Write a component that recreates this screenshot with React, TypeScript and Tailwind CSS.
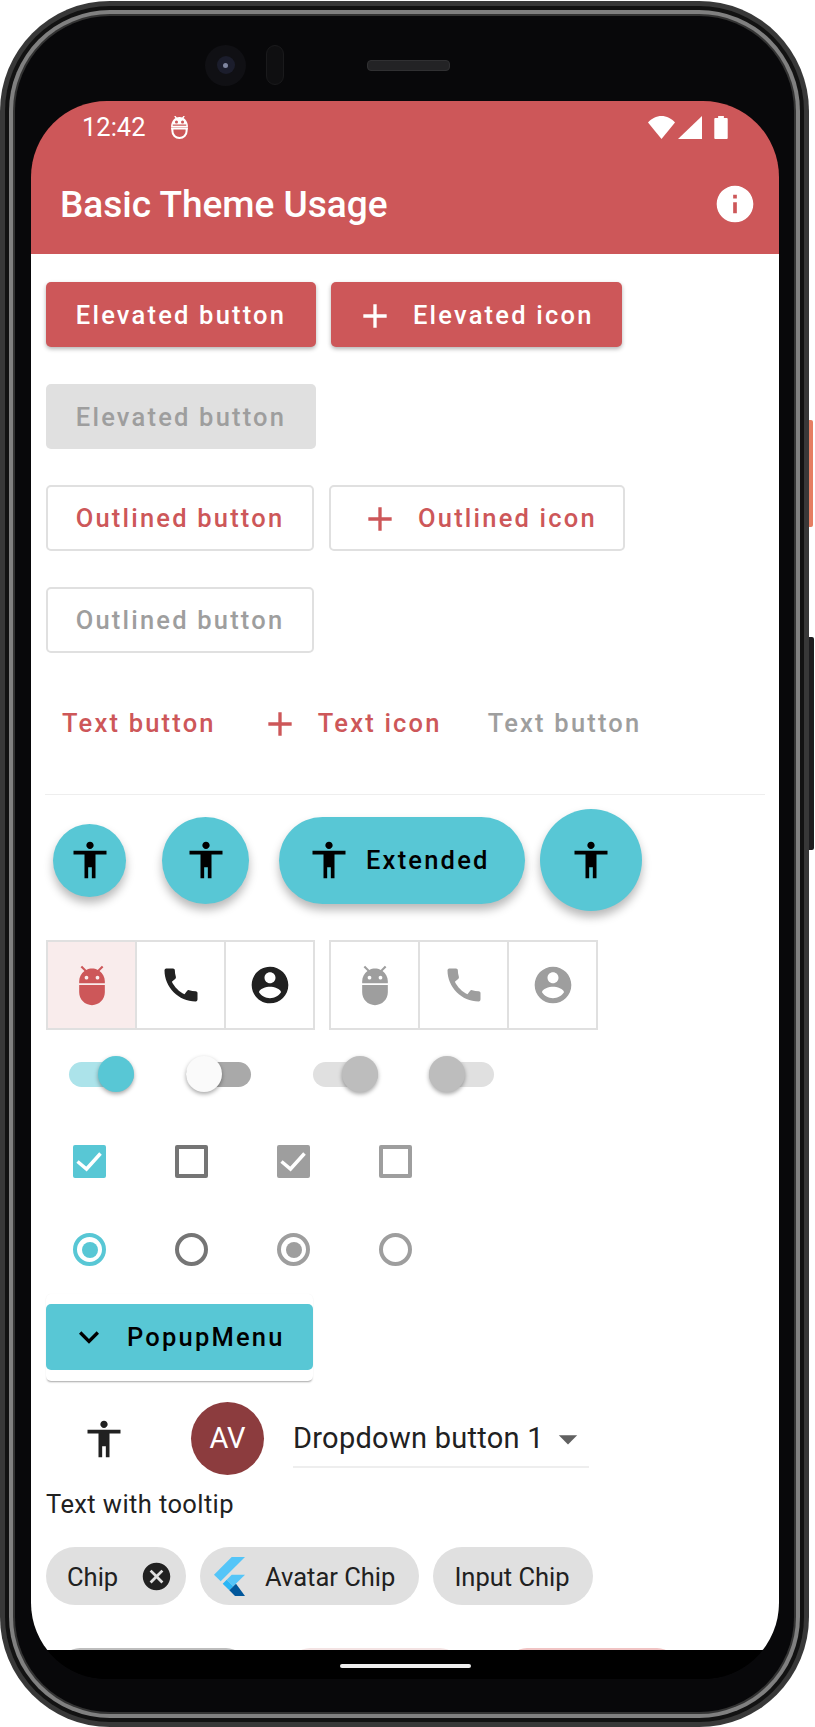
const ADD = "M19 13h-6v6h-2v-6H5v-2h6V5h2v6h6v2z";
const ACCESS =
  "M12 2c1.1 0 2 .9 2 2s-.9 2-2 2-2-.9-2-2 .9-2 2-2zm9 7h-6v13h-2v-6h-2v6H9V9H3V7h18v2z";
const ADB =
  "M5 16c0 3.87 3.13 7 7 7s7-3.13 7-7v-4H5v4zM16.12 4.37l2.1-2.1-.82-.83-2.31 2.31C14.16 3.28 13.12 3 12 3s-2.16.28-3.09.75L6.6 1.44l-.82.83 2.1 2.1C6.14 5.64 5 7.68 5 10v1h14v-1c0-2.32-1.14-4.36-2.88-5.63zM9 9c-.55 0-1-.45-1-1s.45-1 1-1 1 .45 1 1-.45 1-1 1zm6 0c-.55 0-1-.45-1-1s.45-1 1-1 1 .45 1 1-.45 1-1 1z";
const PHONE =
  "M20.01 15.38c-1.23 0-2.42-.2-3.53-.56-.35-.12-.74-.03-1.01.24l-1.57 1.97c-2.83-1.35-5.48-3.9-6.89-6.83l1.95-1.66c.27-.28.35-.67.24-1.02-.37-1.11-.56-2.3-.56-3.53 0-.54-.45-.99-.99-.99H4.19C3.65 3 3 3.24 3 3.99 3 13.28 10.73 21 20.01 21c.71 0 .99-.63.99-1.18v-3.45c0-.54-.45-.99-.99-.99z";
const ACCOUNT =
  "M12 2C6.48 2 2 6.48 2 12s4.48 10 10 10 10-4.48 10-10S17.52 2 12 2zm0 3c1.66 0 3 1.34 3 3s-1.34 3-3 3-3-1.34-3-3 1.34-3 3-3zm0 14.2c-2.5 0-4.71-1.28-6-3.22.03-1.99 4-3.08 6-3.08 1.99 0 5.97 1.09 6 3.08-1.29 1.94-3.5 3.22-6 3.22z";
const INFO =
  "M12 2C6.48 2 2 6.48 2 12s4.48 10 10 10 10-4.48 10-10S17.52 2 12 2zm1 15h-2v-6h2v6zm0-8h-2V7h2v2z";
const CANCEL =
  "M12 2C6.47 2 2 6.47 2 12s4.47 10 10 10 10-4.47 10-10S17.53 2 12 2zm5 13.59L15.59 17 12 13.41 8.41 17 7 15.59 10.59 12 7 8.41 8.41 7 12 10.59 15.59 7 17 8.41 13.41 12 17 15.59z";
const EXPAND = "M16.59 8.59L12 13.17 7.41 8.59 6 10l6 6 6-6z";

const Icon = ({ d, className }: { d: string; className: string }) => (
  <svg viewBox="0 0 24 24" fill="currentColor" className={className}>
    <path d={d} />
  </svg>
);

const btnText = "text-[25.5px] font-medium tracking-[2.2px] leading-none pt-[2px]";

const Fab = ({ className, label }: { className: string; label?: string }) => (
  <div
    className={`flex items-center justify-center rounded-full bg-[#58c7d5] text-black shadow-[0_6px_10px_rgba(0,0,0,0.28)] ${className}`}
  >
    <Icon d={ACCESS} className="w-[44px] h-[44px] shrink-0" />
    {label && <span className={`ml-[15px] ${btnText}`}>{label}</span>}
  </div>
);

const ToggleGroup = ({ disabled }: { disabled?: boolean }) => {
  const cell = "flex-1 flex items-center justify-center";
  return (
    <div
      className={`flex h-[90px] w-[269px] border-2 border-[#e0e0e0] divide-x-2 divide-[#e0e0e0] ${
        disabled ? "text-[#9e9e9e]" : "text-[#212121]"
      }`}
    >
      <div className={`${cell} ${disabled ? "" : "bg-[#f9ecec] text-[#cd5759]"}`}>
        <Icon d={ADB} className="w-[44px] h-[44px]" />
      </div>
      <div className={cell}>
        <Icon d={PHONE} className="w-[44px] h-[44px]" />
      </div>
      <div className={cell}>
        <Icon d={ACCOUNT} className="w-[44px] h-[44px]" />
      </div>
    </div>
  );
};

const Switch = ({
  className,
  track,
  thumb,
  on,
}: {
  className: string;
  track: string;
  thumb: string;
  on: boolean;
}) => (
  <div
    className={`flex items-center w-[65px] h-[25px] rounded-full ${track} ${className} ${
      on ? "justify-end" : "justify-start"
    }`}
  >
    <div
      className={`w-[36px] h-[36px] shrink-0 rounded-full shadow-[0_2px_4px_rgba(0,0,0,0.35)] ${thumb}`}
    />
  </div>
);

const Checkbox = ({ color, checked }: { color: string; checked: boolean }) => (
  <div className="w-[102px] pl-[27px]">
    <div
      className={`w-[33px] h-[33px] rounded-[2px] border-[4px] flex items-center justify-center ${color} ${
        checked ? "bg-current" : ""
      }`}
    >
      {checked && (
        <svg
          viewBox="0 0 33 33"
          fill="none"
          stroke="white"
          strokeWidth="3.5"
          className="w-[33px] h-[33px] shrink-0"
        >
          <path d="M4.500 16.500l9 7.500 14-15.500" />
        </svg>
      )}
    </div>
  </div>
);

const Radio = ({ color, checked }: { color: string; checked: boolean }) => (
  <div className="w-[102px] pl-[27px]">
    <div
      className={`w-[33px] h-[33px] rounded-full border-[4px] border-current flex items-center justify-center ${color}`}
    >
      {checked && <div className="w-[16px] h-[16px] shrink-0 rounded-full bg-current" />}
    </div>
  </div>
);

const FlutterLogo = () => (
  <svg viewBox="0 0 93 117" className="w-[31px] h-[39px] shrink-0">
    <path d="M93 0H53L0 53l20 20z" fill="#54c5f8" />
    <path d="M93 53H53L38 68l20 20z" fill="#54c5f8" />
    <path d="M38 68L26 80l20 20 12-12z" fill="#29b6f6" />
    <path d="M46 100l20-20 27 37H63z" fill="#01579b" />
  </svg>
);

export default function App() {
  return (
    <div className="relative w-[815px] h-[1727px] bg-white overflow-hidden font-['Roboto',sans-serif]">
      {/* side buttons */}
      <div className="absolute left-[806px] top-[420px] w-[7px] h-[107px] rounded-r-[2px] bg-[#e67e62]" />
      <div className="absolute left-[806px] top-[637px] w-[8px] h-[213px] rounded-r-[2px] bg-[#1d1d1f]" />

      {/* phone body */}
      <div className="relative w-[809px] h-[1726px] mt-[1px] rounded-[110px] bg-[#383838] p-[5px]">
        <div className="w-full h-full rounded-[105px] bg-[#121212] p-[4px]">
          <div className="w-full h-full rounded-[101px] bg-[#808080] p-[4px]">
            <div className="w-full h-full rounded-[97px] bg-[#333333] p-[2px]">
              <div className="w-full h-full rounded-[95px] bg-[#08080a] pt-[23px] pl-[16px] pr-[15px] pb-[33px] flex flex-col">
                {/* camera and speaker */}
                <div className="h-[52px] mb-[10px] shrink-0 flex items-center pl-[174px]">
                  <div className="w-[41px] h-[41px] rounded-full bg-[#101014] flex items-center justify-center">
                    <div className="w-[18px] h-[18px] rounded-full bg-[#1b1d2c] flex items-center justify-center">
                      <div className="w-[5px] h-[5px] rounded-full bg-[#7f86a0]" />
                    </div>
                  </div>
                  <div className="ml-[20px] w-[18px] h-[40px] rounded-full bg-[#0f0f11] border border-[#1a1a1c]" />
                  <div className="ml-[83px] w-[83px] h-[11px] rounded-[4px] bg-[#232325] border border-[#303032]" />
                </div>

                {/* screen */}
                <div className="flex-1 rounded-[76px] overflow-hidden bg-black flex flex-col">
                  {/* status bar */}
                  <div className="h-[51px] shrink-0 bg-[#cd5759] text-white flex items-center pl-[51px] pr-[51px] pt-[2px]">
                    <span className="text-[25.5px] leading-none">12:42</span>
                    <svg viewBox="0 0 56 68" className="ml-[24px] w-[19px] h-[23px]">
                      <path
                        d="M3 33C3 15 14 3 28 3s25 12 25 30z"
                        fill="currentColor"
                      />
                      <path d="M14 0l6 8M42 0l-6 8" stroke="currentColor" strokeWidth="4" />
                      <circle cx="19" cy="18" r="4.500" fill="#cd5759" />
                      <circle cx="37" cy="18" r="4.500" fill="#cd5759" />
                      <path d="M8 27h40" stroke="#cd5759" strokeWidth="4" />
                      <path
                        d="M3 37h50M7 37v7c0 12 9 21 21 21s21-9 21-21v-4"
                        fill="none"
                        stroke="currentColor"
                        strokeWidth="6"
                      />
                    </svg>
                    <div className="ml-auto flex items-center">
                      <svg viewBox="0 0 27 23" fill="currentColor" className="w-[27px] h-[23px]">
                        <path d="M13.500 23L0 6.500C3.500 2.500 8.500 0 13.500 0S23.500 2.500 27 6.500z" />
                      </svg>
                      <svg viewBox="0 0 24 23" fill="currentColor" className="ml-[3px] w-[24px] h-[23px]">
                        <path d="M24 0v23H0z" />
                      </svg>
                      <svg viewBox="0 0 14 24" fill="currentColor" className="ml-[12px] w-[14px] h-[23px]">
                        <path d="M4 2V0h6v2h3a1 1 0 0 1 1 1v20a1 1 0 0 1-1 1H1a1 1 0 0 1-1-1V3a1 1 0 0 1 1-1z" />
                      </svg>
                    </div>
                  </div>

                  {/* app bar */}
                  <div className="h-[102px] shrink-0 bg-[#cd5759] text-white flex items-center pl-[29px] pr-[22px] pt-[2px]">
                    <span className="text-[37px] leading-none font-medium">Basic Theme Usage</span>
                    <Icon d={INFO} className="ml-auto w-[44px] h-[44px]" />
                  </div>

                  {/* body */}
                  <div className="flex-1 min-h-0 overflow-hidden bg-white px-[15px] pt-[28px]">
                    <div className="flex gap-[15px]">
                      <div className={`h-[65px] w-[270px] flex items-center justify-center rounded-[5px] bg-[#cd5759] text-white shadow-[0_2px_4px_rgba(0,0,0,0.3)] ${btnText}`}>
                        Elevated button
                      </div>
                      <div className={`h-[65px] w-[291px] flex items-center pl-[24px] rounded-[5px] bg-[#cd5759] text-white shadow-[0_2px_4px_rgba(0,0,0,0.3)] ${btnText}`}>
                        <Icon d={ADD} className="w-[40px] h-[40px] mr-[18px]" />
                        Elevated icon
                      </div>
                    </div>

                    <div className={`mt-[37px] h-[65px] w-[270px] flex items-center justify-center rounded-[5px] bg-[#e0e0e0] text-[#9e9e9e] ${btnText}`}>
                      Elevated button
                    </div>

                    <div className="mt-[36px] flex gap-[15px]">
                      <div className={`h-[66px] w-[268px] flex items-center justify-center rounded-[5px] border-2 border-[#e0e0e0] text-[#cd5759] ${btnText}`}>
                        Outlined button
                      </div>
                      <div className={`h-[66px] w-[296px] flex items-center pl-[29px] rounded-[5px] border-2 border-[#e0e0e0] text-[#cd5759] ${btnText}`}>
                        <Icon d={ADD} className="w-[40px] h-[40px] mr-[18px]" />
                        Outlined icon
                      </div>
                    </div>

                    <div className={`mt-[36px] h-[66px] w-[268px] flex items-center justify-center rounded-[5px] border-2 border-[#e0e0e0] text-[#9e9e9e] ${btnText}`}>
                      Outlined button
                    </div>

                    <div className={`mt-[37px] h-[65px] flex items-center ${btnText}`}>
                      <span className="ml-[16px] text-[#cd5759]">Text button</span>
                      <Icon d={ADD} className="ml-[44px] w-[40px] h-[40px] text-[#cd5759]" />
                      <span className="ml-[18px] text-[#cd5759]">Text icon</span>
                      <span className="ml-[46px] text-[#9e9e9e]">Text button</span>
                    </div>

                    <div className="mt-[39px] -ml-[1px] h-[1px] w-[720px] bg-[#eeeeee]" />

                    {/* fabs */}
                    <div className="mt-[14px] h-[102px] flex items-center">
                      <Fab className="ml-[7px] w-[73px] h-[73px]" />
                      <Fab className="ml-[36px] w-[87px] h-[87px]" />
                      <Fab className="ml-[30px] w-[246px] h-[87px] justify-start pl-[28px]" label="Extended" />
                      <Fab className="ml-[15px] w-[102px] h-[102px]" />
                    </div>

                    {/* toggle buttons */}
                    <div className="mt-[29px] flex gap-[14px]">
                      <ToggleGroup />
                      <ToggleGroup disabled />
                    </div>

                    {/* switches */}
                    <div className="mt-[26px] h-[36px] flex items-center">
                      <Switch className="ml-[23px]" track="bg-[#acE3ea]" thumb="bg-[#58c7d5]" on />
                      <Switch className="ml-[52px]" track="bg-[#a9a9a9]" thumb="bg-[#fafafa]" on={false} />
                      <Switch className="ml-[62px]" track="bg-[#e0e0e0]" thumb="bg-[#bdbdbd]" on />
                      <Switch className="ml-[51px]" track="bg-[#e0e0e0]" thumb="bg-[#bdbdbd]" on={false} />
                    </div>

                    {/* checkboxes */}
                    <div className="mt-[53px] flex">
                      <Checkbox color="text-[#58c7d5] border-[#58c7d5]" checked />
                      <Checkbox color="text-[#757575] border-[#757575]" checked={false} />
                      <Checkbox color="text-[#9e9e9e] border-[#9e9e9e]" checked />
                      <Checkbox color="text-[#9e9e9e] border-[#9e9e9e]" checked={false} />
                    </div>

                    {/* radios */}
                    <div className="mt-[55px] flex">
                      <Radio color="text-[#58c7d5]" checked />
                      <Radio color="text-[#757575]" checked={false} />
                      <Radio color="text-[#9e9e9e]" checked />
                      <Radio color="text-[#9e9e9e]" checked={false} />
                    </div>

                    {/* popup menu */}
                    <div className="mt-[28px] w-[267px] h-[87px] py-[10px] rounded-[5px] bg-white shadow-[0_2px_2px_-1px_rgba(0,0,0,0.35),0_0_1px_rgba(0,0,0,0.06)]">
                      <div className="h-[66px] rounded-[5px] bg-[#58c7d5] text-black flex items-center pl-[23px]">
                        <Icon d={EXPAND} className="w-[40px] h-[40px] mr-[18px]" />
                        <span className={btnText}>PopupMenu</span>
                      </div>
                    </div>

                    {/* icon, avatar, dropdown */}
                    <div className="mt-[21px] h-[73px] flex items-center">
                      <Icon d={ACCESS} className="ml-[36px] w-[44px] h-[44px] text-[#212121]" />
                      <div className="ml-[65px] w-[73px] h-[73px] rounded-full bg-[#8c3c3e] text-white text-[29px] flex items-center justify-center">
                        AV
                      </div>
                      <div className="ml-[29px] w-[296px] h-[63px] self-start mt-[3px] pt-[7px] border-b-2 border-[#eeeeee] flex items-center text-[29px] text-[#212121] tracking-[0.27px]">
                        Dropdown button 1
                        <Icon d="M7 10l5 5 5-5z" className="ml-auto -mr-[1px] w-[44px] h-[44px] text-[#616161]" />
                      </div>
                    </div>

                    <div className="mt-[14px] h-[30px] text-[25.5px] leading-[30px] text-[#212121] tracking-[0.4px]">
                      Text with tooltip
                    </div>

                    {/* chips */}
                    <div className="mt-[28px] flex gap-[14px] h-[58px] text-[25.5px] text-[#212121]">
                      <div className="w-[140px] rounded-full bg-[#e0e0e0] flex items-center pl-[21px]">
                        <span className="pt-[2px]">Chip</span>
                        <Icon d={CANCEL} className="ml-auto mr-[13px] w-[33px] h-[33px]" />
                      </div>
                      <div className="w-[219px] rounded-full bg-[#e0e0e0] flex items-center pl-[14px]">
                        <FlutterLogo />
                        <span className="ml-[20px] pt-[2px]">Avatar Chip</span>
                      </div>
                      <div className="w-[160px] rounded-full bg-[#e0e0e0] flex items-center justify-center pr-[2px]">
                        <span className="pt-[2px]">Input Chip</span>
                      </div>
                    </div>

                    {/* next row, cut off by the nav bar */}
                    <div className="mt-[43px] ml-[14px] flex h-[40px]">
                      <div className="w-[186px] rounded-full bg-[#bdbdbd]" />
                      <div className="ml-[44px] w-[170px] rounded-full bg-[#f3e3e3]" />
                      <div className="ml-[47px] w-[170px] rounded-full bg-[#f0c4c4]" />
                    </div>
                  </div>

                  {/* nav bar */}
                  <div className="h-[29px] shrink-0 bg-black flex justify-center pt-[14px]">
                    <div className="w-[131px] h-[4px] rounded-full bg-[#eeeeee]" />
                  </div>
                </div>
              </div>
            </div>
          </div>
        </div>
      </div>
    </div>
  );
}
